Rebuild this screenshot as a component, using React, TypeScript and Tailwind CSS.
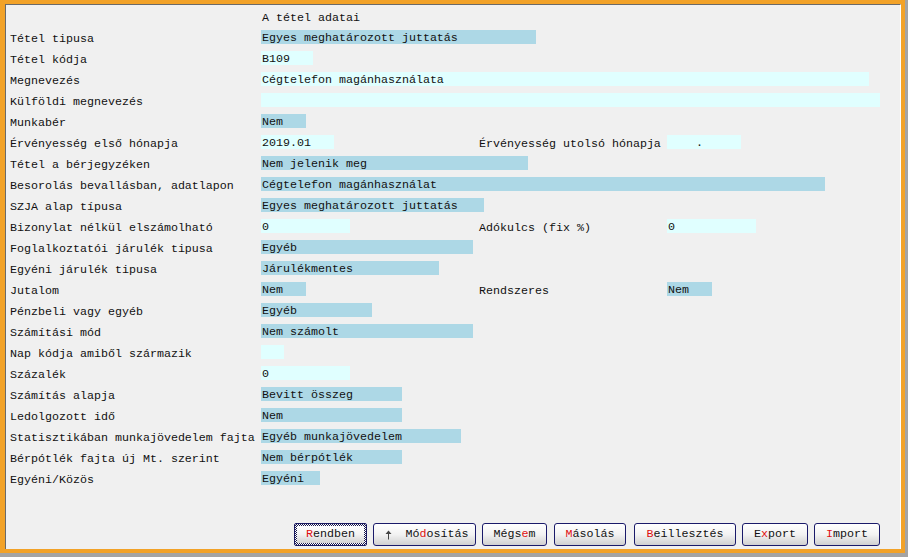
import React from "react";

type Row = {
  label: string;
  value: string;
  w: string;
  dark: boolean;
  label2?: string;
  value2?: string;
  w2?: string;
  dark2?: boolean;
};

const rows: Row[] = [
  { label: "Tétel tipusa", value: "Egyes meghatározott juttatás", w: "w-[275px]", dark: true },
  { label: "Tétel kódja", value: "B109", w: "w-[52px]", dark: false },
  { label: "Megnevezés", value: "Cégtelefon magánhasználata", w: "w-[608px]", dark: false },
  { label: "Külföldi megnevezés", value: "", w: "w-[619px]", dark: false },
  { label: "Munkabér", value: "Nem", w: "w-[45px]", dark: true },
  {
    label: "Érvényesség első hónapja",
    value: "2019.01",
    w: "w-[73px]",
    dark: false,
    label2: "Érvényesség utolsó hónapja",
    value2: "    .",
    w2: "w-[74px]",
    dark2: false,
  },
  { label: "Tétel a bérjegyzéken", value: "Nem jelenik meg", w: "w-[267px]", dark: true },
  { label: "Besorolás bevallásban, adatlapon", value: "Cégtelefon magánhasználat", w: "w-[564px]", dark: true },
  { label: "SZJA alap típusa", value: "Egyes meghatározott juttatás", w: "w-[223px]", dark: true },
  {
    label: "Bizonylat nélkül elszámolható",
    value: "0",
    w: "w-[89px]",
    dark: false,
    label2: "Adókulcs (fix %)",
    value2: "0",
    w2: "w-[89px]",
    dark2: false,
  },
  { label: "Foglalkoztatói járulék tipusa", value: "Egyéb", w: "w-[212px]", dark: true },
  { label: "Egyéni járulék tipusa", value: "Járulékmentes", w: "w-[178px]", dark: true },
  {
    label: "Jutalom",
    value: "Nem",
    w: "w-[45px]",
    dark: true,
    label2: "Rendszeres",
    value2: "Nem",
    w2: "w-[45px]",
    dark2: true,
  },
  { label: "Pénzbeli vagy egyéb", value: "Egyéb", w: "w-[111px]", dark: true },
  { label: "Számítási mód", value: "Nem számolt", w: "w-[212px]", dark: true },
  { label: "Nap kódja amiből származik", value: "", w: "w-[23px]", dark: false },
  { label: "Százalék", value: "0", w: "w-[89px]", dark: false },
  { label: "Számítás alapja", value: "Bevitt összeg", w: "w-[141px]", dark: true },
  { label: "Ledolgozott idő", value: "Nem", w: "w-[141px]", dark: true },
  { label: "Statisztikában munkajövedelem fajta", value: "Egyéb munkajövedelem", w: "w-[200px]", dark: true },
  { label: "Bérpótlék fajta új Mt. szerint", value: "Nem bérpótlék", w: "w-[141px]", dark: true },
  { label: "Egyéni/Közös", value: "Egyéni", w: "w-[59px]", dark: true },
];

function Box({ value, w, dark }: { value: string; w: string; dark: boolean }) {
  return (
    <div
      className={`mt-[1px] h-[14px] shrink-0 whitespace-pre pl-[1px] leading-[16px] ${w} ${
        dark ? "bg-[#add8e6]" : "bg-[#e0ffff]"
      }`}
    >
      {value}
    </div>
  );
}

function Btn({
  pre,
  acc,
  post,
  w,
  ml,
  focused,
  arrow,
}: {
  pre: string;
  acc: string;
  post: string;
  w: string;
  ml: string;
  focused?: boolean;
  arrow?: boolean;
}) {
  const label = (
    <span className="whitespace-pre">
      {pre}
      <span className="text-[#e01010]">{acc}</span>
      {post}
    </span>
  );
  if (focused) {
    return (
      <div
        className={`${w} ${ml} h-[23px] shrink-0 rounded-[2px] border border-[#1a1a60] bg-[image:repeating-conic-gradient(#1a1a50_0_25%,#ffffff_0_50%)] bg-[length:2px_2px] p-[2px]`}
      >
        <div className="flex h-full w-full items-center justify-center bg-linear-to-b from-white via-[#f2f2f2] to-[#d2d2d2] leading-none">
          {label}
        </div>
      </div>
    );
  }
  return (
    <div
      className={`${w} ${ml} flex h-[23px] shrink-0 items-center justify-center rounded-[3px] border border-[#1a1a6a] bg-linear-to-b from-white via-[#f2f2f2] to-[#d0d0d0] leading-none`}
    >
      {arrow && (
        <svg width="7" height="10" viewBox="0 0 7 10" className="ml-[4px] mr-[14px]">
          <path d="M3.5 0.5 L6.5 4 L4 4 L4 9.5 L3 9.5 L3 4 L0.5 4 Z" fill="#444" />
        </svg>
      )}
      {label}
    </div>
  );
}

export default function App() {
  return (
    <div className="h-[557px] w-[908px] overflow-hidden bg-[#a4a4a4] font-['Liberation_Mono','Courier_New',monospace] text-[11.67px] text-[#111]">
      <div className="h-[553px] w-[905px] bg-[#f2a228] pb-[4px] pl-[5px] pr-[4px] pt-[4px]">
        <div className="flex h-full flex-col border-l border-r border-t border-l-[#6a6a6a] border-r-white border-t-[#6a6a6a] bg-[#f0f0f0] pl-[4px] pt-[3px]">
          <div className="ml-[252px] h-[21px] leading-[21px]">A tétel adatai</div>
          {rows.map((r) => (
            <div key={r.label} className="flex h-[21px] items-start">
              <div className="w-[251px] shrink-0 whitespace-pre leading-[21px]">{r.label}</div>
              {r.label2 ? (
                <>
                  <div className="w-[218px] shrink-0">
                    <Box value={r.value} w={r.w} dark={r.dark} />
                  </div>
                  <div className="w-[188px] shrink-0 whitespace-pre leading-[21px]">{r.label2}</div>
                  <Box value={r.value2 ?? ""} w={r.w2 ?? ""} dark={!!r.dark2} />
                </>
              ) : (
                <Box value={r.value} w={r.w} dark={r.dark} />
              )}
            </div>
          ))}
          <div className="flex-1" />
          <div className="flex justify-end pb-[3px] pr-[20px]">
            <Btn pre="" acc="R" post="endben" w="w-[73px]" ml="ml-0" focused />
            <Btn pre="Mó" acc="d" post="osítás" w="w-[103px]" ml="ml-[6px]" arrow />
            <Btn pre="Mégs" acc="e" post="m" w="w-[65px]" ml="ml-[6px]" />
            <Btn pre="" acc="M" post="ásolás" w="w-[72px]" ml="ml-[7px]" />
            <Btn pre="" acc="B" post="eillesztés" w="w-[102px]" ml="ml-[8px]" />
            <Btn pre="E" acc="x" post="port" w="w-[66px]" ml="ml-[6px]" />
            <Btn pre="" acc="I" post="mport" w="w-[66px]" ml="ml-[6px]" />
          </div>
        </div>
      </div>
    </div>
  );
}
